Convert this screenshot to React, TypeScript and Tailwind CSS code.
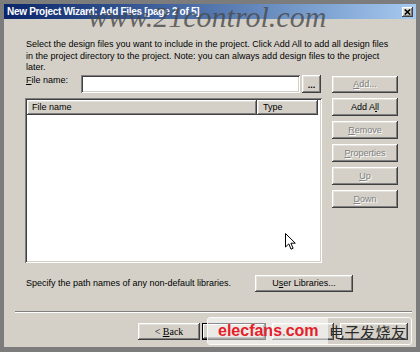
import React from "react";

const RAISED =
  "bg-[#d4d0c8] shadow-[inset_-1px_-1px_#404040,inset_1px_1px_#ffffff,inset_-2px_-2px_#808080,inset_2px_2px_#e4e1da]";
const DEFAULT_BTN =
  "bg-[#d4d0c8] shadow-[inset_0_0_0_1px_#000000,inset_-2px_-2px_#404040,inset_2px_2px_#ffffff,inset_-3px_-3px_#808080]";
const SUNKEN =
  "shadow-[inset_1px_1px_#808080,inset_-1px_-1px_#ffffff,inset_2px_2px_#404040,inset_-2px_-2px_#d4d0c8]";
const DIS = "text-[#808080] [text-shadow:1px_1px_0_#ffffff]";

function Btn({
  children,
  className = "",
  disabled = false,
}: {
  children?: React.ReactNode;
  className?: string;
  disabled?: boolean;
}) {
  return (
    <div
      className={`${RAISED} flex items-center justify-center text-[9px] leading-none whitespace-nowrap ${
        disabled ? DIS : "text-black"
      } ${className}`}
    >
      {children}
    </div>
  );
}

export default function App() {
  return (
    <div className="w-[420px] h-[352px] bg-[#7c7c7c] pt-[4px] px-[4px] pb-[5px] flex flex-col relative overflow-hidden font-['Liberation_Sans',Arial,sans-serif] text-black">
      {/* Title bar */}
      <div className="h-[15px] shrink-0 bg-linear-to-r from-[#0a246a] to-[#a6caf0] flex items-center justify-between pl-[3px] pr-[3px]">
        <span className="text-white font-bold text-[10px] leading-none tracking-[-0.3px] whitespace-nowrap">
          New Project Wizard: Add Files [page 2 of 5]
        </span>
        <div className={`w-[11px] h-[10px] ${RAISED} flex items-center justify-center`}>
          <svg width="7" height="6" viewBox="0 0 7 6">
            <path d="M0.8 0.5 L6.2 5.5 M6.2 0.5 L0.8 5.5" stroke="#000" strokeWidth="1.6" />
          </svg>
        </div>
      </div>

      {/* Body */}
      <div className="flex-1 bg-[#d4d0c8] relative flex flex-col pt-[20px]">
        <div className="pl-[22px] h-[36px] text-[9px] leading-[11.5px] whitespace-nowrap">
          <div>Select the design files you want to include in the project. Click Add All to add all design files</div>
          <div>in the project directory to the project. Note: you can always add design files to the project</div>
          <div>later.</div>
        </div>

        <div className="pl-[21px] grid grid-cols-[297px_66px] gap-x-[10px] gap-y-[5px]">
          {/* Row 1 left */}
          <div className="flex h-[18px]">
            <div className="w-[56px] pl-[1px] text-[9px] leading-[11.5px] whitespace-nowrap">
              <u>F</u>ile name:
            </div>
            <div className={`w-[219px] h-[18px] bg-white ${SUNKEN}`} />
            <Btn className="ml-[2px] w-[19px] h-[18px] font-bold">
              <span className="pt-[3px]">...</span>
            </Btn>
          </div>
          {/* Row 1 right */}
          <Btn disabled className="mt-[1px] h-[17px]">
            <span>
              <u>A</u>dd...
            </span>
          </Btn>

          {/* List box */}
          <div className={`h-[165px] bg-white ${SUNKEN} p-[2px] flex flex-col`}>
            <div className="flex h-[15px]">
              <div className={`w-[230px] h-full ${RAISED} flex items-center pl-[5px] text-[9px] leading-none`}>
                File name
              </div>
              <div className={`w-[61px] h-full ${RAISED} flex items-center pl-[6px] text-[9px] leading-none`}>
                Type
              </div>
            </div>
          </div>

          {/* Right buttons */}
          <div className="flex flex-col gap-[5px]">
            <Btn className="h-[18px]">
              <span>
                Add A<u>l</u>l
              </span>
            </Btn>
            <Btn disabled className="h-[18px]">
              <span>
                <u>R</u>emove
              </span>
            </Btn>
            <Btn disabled className="h-[18px]">
              <span>
                <u>P</u>roperties
              </span>
            </Btn>
            <Btn disabled className="h-[18px]">
              <span>
                <u>U</u>p
              </span>
            </Btn>
            <Btn disabled className="h-[18px]">
              <span>
                <u>D</u>own
              </span>
            </Btn>
          </div>
        </div>

        {/* Specify row */}
        <div className="mt-[12px] h-[17px] flex items-center pl-[22px]">
          <div className="w-[229px] text-[9px] leading-none whitespace-nowrap">
            Specify the path names of any non-default libraries.
          </div>
          <Btn className="w-[98px] h-[17px]">
            <span>
              U<u>s</u>er Libraries...
            </span>
          </Btn>
        </div>

        {/* Separator */}
        <div className="mt-[19px] ml-[11px] w-[397px] h-[2px] border-t border-t-[#808080] border-b border-b-white" />

        {/* Bottom buttons (Next / Cancel / Help lie under the watermark) */}
        <div className="mt-[10px] h-[17px] flex pl-[134px]">
          <Btn className="w-[62px] h-[17px] font-['Liberation_Serif',serif] text-[10px]">
            <span>
              &lt; <u>B</u>ack
            </span>
          </Btn>
          <div className={`ml-[2px] w-[64px] h-[17px] ${DEFAULT_BTN}`} />
          <Btn className="ml-[6px] w-[62px] h-[17px]" />
          <Btn className="ml-[6px] w-[68px] h-[17px]" />
        </div>

        {/* Mouse cursor */}
        <svg className="absolute left-[281px] top-[214px]" width="12" height="18" viewBox="0 0 12 18">
          <path
            d="M0.5 0.5 L0.5 14 L3.8 10.9 L6 16.2 L8.1 15.3 L5.9 10.2 L10.3 10.2 Z"
            fill="#ffffff"
            stroke="#000000"
            strokeWidth="1"
          />
        </svg>
      </div>

      {/* www.21control.com watermark */}
      <div className="absolute left-[88px] top-[2px] font-['Liberation_Serif',serif] italic text-[30px] leading-[30px] text-[#484848]/80 whitespace-nowrap pointer-events-none">
        www.21control.com
      </div>

      {/* elecfans watermark */}
      <div className="absolute left-[207px] top-[317px] w-[205px] h-[28px] border border-white/90 rounded-[3px] flex items-stretch overflow-hidden">
        <div className="w-[120px] bg-white/55 flex items-center pl-[10px] whitespace-nowrap">
          <span className="text-[#e5202a] font-bold text-[16px] leading-none">elecfans</span>
          <span className="text-[#9a9a9a] font-bold text-[13px] leading-none">.</span>
          <span className="text-[#e5202a] font-bold text-[16px] leading-none">com</span>
        </div>
        <div className="flex-1 flex items-center pl-[1px] font-['Noto_Sans_CJK_SC',sans-serif] text-[15px] leading-none tracking-[0.5px] text-[#2a2a2a] whitespace-nowrap overflow-hidden">
          电子发烧友
        </div>
      </div>
    </div>
  );
}
